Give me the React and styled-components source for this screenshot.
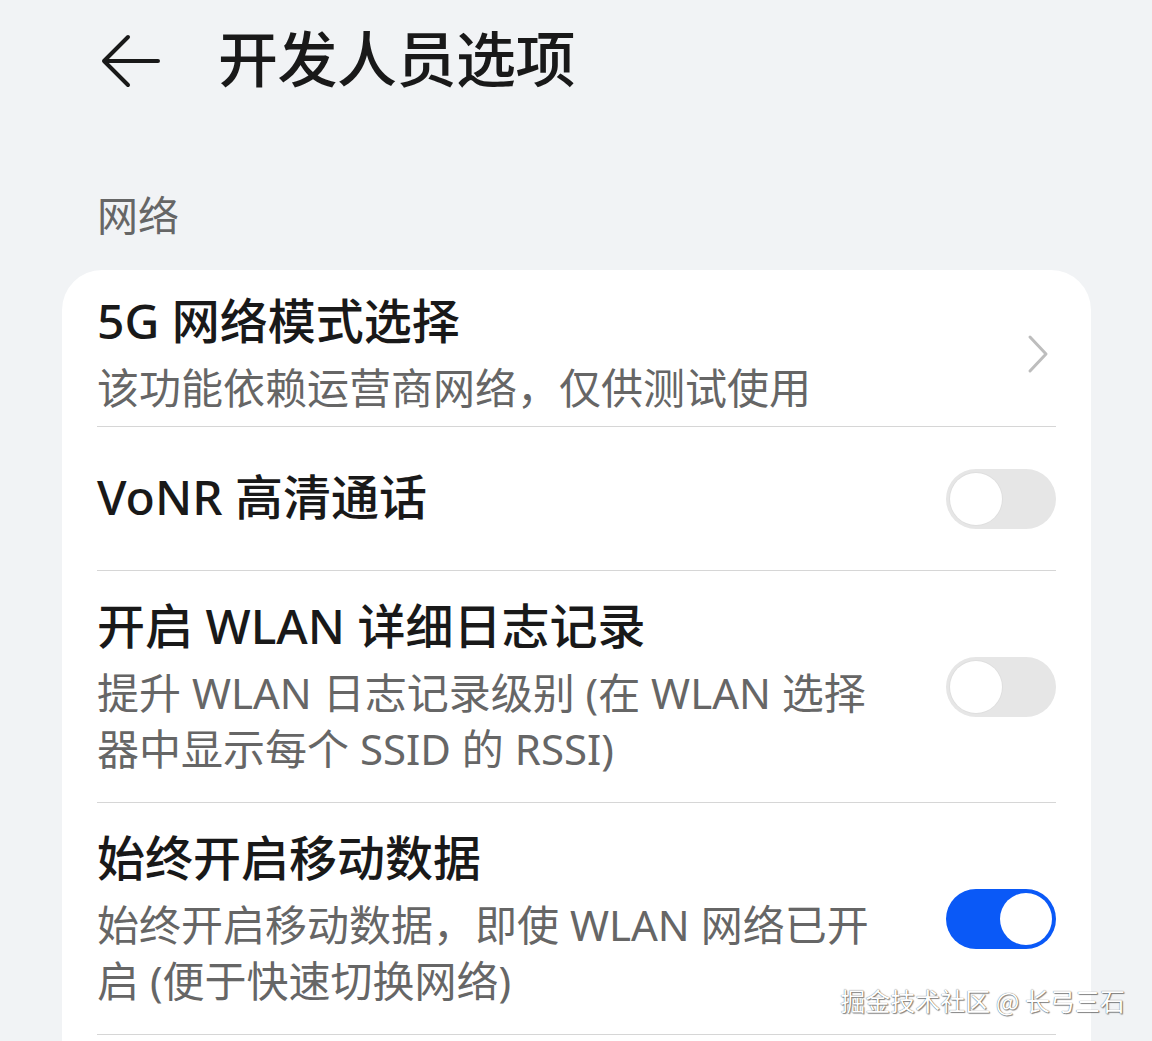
import React from "react";
import styled, { createGlobalStyle } from "styled-components";

const Global = createGlobalStyle`
  html, body {
    margin: 0;
    padding: 0;
    background: #f1f3f5;
    overflow: hidden;
  }
  body {
    font-family: "Noto Sans", "Noto Sans CJK SC", sans-serif;
    -webkit-font-smoothing: antialiased;
  }
`;

const Page = styled.div`
  position: relative;
  width: 1152px;
  height: 1041px;
  overflow: hidden;
  background: #f1f3f5;
  padding: 0 61px 0 62px;
  box-sizing: border-box;
`;

const Header = styled.header`
  height: 122px;
  display: flex;
  align-items: center;
  padding-left: 38px;
  gap: 54px;
`;

const BackIcon = styled.svg`
  width: 64px;
  height: 56px;
  flex: none;
`;

const Title = styled.h1`
  margin: 0;
  font-size: 60px;
  line-height: 76px;
  padding-bottom: 4px;
  font-weight: 500;
  color: #191919;
  letter-spacing: -0.5px;
`;

const SectionLabel = styled.div`
  padding: 68px 35px 24px;
  font-size: 41px;
  line-height: 50px;
  padding-bottom: 30px;
  color: #666666;
`;

const Card = styled.section`
  background: #ffffff;
  border-radius: 40px 40px 0 0;
  padding: 0 35px 60px;
`;

const Row = styled.div`
  display: flex;
  align-items: center;
  gap: 24px;
  padding: ${(p) => p.$pt}px 0 ${(p) => p.$pb}px;
  border-bottom: 1px solid #d6d6d6;
`;

const Texts = styled.div`
  flex: 1;
  min-width: 0;
  display: flex;
  flex-direction: column;
  gap: 6px;
`;

const RowTitle = styled.div`
  font-size: 48px;
  line-height: 62px;
  padding-bottom: 4px;
  font-weight: 500;
  color: #191919;
  white-space: nowrap;
`;

const Sub = styled.div`
  font-size: 42px;
  color: #666666;
`;

const SubLine = styled.div`
  line-height: 52px;
  padding-bottom: 4px;
  white-space: nowrap;
`;

const Chevron = styled.svg`
  width: 24px;
  height: 40px;
  flex: none;
  margin-right: 6px;
`;

const Track = styled.div`
  position: relative;
  flex: none;
  width: 110px;
  height: 60px;
  border-radius: 30px;
  background: ${(p) => (p.$on ? "#0a59f7" : "#e6e6e6")};
`;

const Knob = styled.div`
  position: absolute;
  top: 4px;
  left: ${(p) => (p.$on ? "54px" : "4px")};
  width: 52px;
  height: 52px;
  border-radius: 50%;
  background: #ffffff;
  box-shadow: ${(p) => (p.$on ? "none" : "0 0 0 1px rgba(0,0,0,0.03)")};
`;

const Watermark = styled.div`
  position: absolute;
  right: 27px;
  bottom: 24px;
  font-family: "Noto Sans CJK SC", sans-serif;
  font-size: 25px;
  line-height: 34px;
  color: #ffffff;
  text-shadow: 0 0 1px rgba(0, 0, 0, 0.7), 1px 1px 1px rgba(0, 0, 0, 0.45);
  white-space: nowrap;
`;

const Toggle = ({ on }) => (
  <Track $on={on}>
    <Knob $on={on} />
  </Track>
);

const rows = [
  {
    title: "5G 网络模式选择",
    sub: ["该功能依赖运营商网络，仅供测试使用"],
    control: "chevron",
    pt: 20,
    pb: 8,
  },
  { title: "VoNR 高清通话", sub: [], control: "off", pt: 39, pb: 38 },
  {
    title: "开启 WLAN 详细日志记录",
    sub: ["提升 WLAN 日志记录级别 (在 WLAN 选择", "器中显示每个 SSID 的 RSSI)"],
    control: "off",
    pt: 24,
    pb: 23,
  },
  {
    title: "始终开启移动数据",
    sub: ["始终开启移动数据，即使 WLAN 网络已开", "启 (便于快速切换网络)"],
    control: "on",
    pt: 24,
    pb: 23,
  },
];

export default function App() {
  return (
    <>
      <Global />
      <Page>
        <Header>
          <BackIcon viewBox="0 0 64 56" fill="none">
            <path
              d="M58 28H4M28 4L4 28L28 52"
              stroke="#191919"
              strokeWidth="4"
              strokeLinecap="round"
              strokeLinejoin="round"
            />
          </BackIcon>
          <Title>开发人员选项</Title>
        </Header>
        <SectionLabel>网络</SectionLabel>
        <Card>
          {rows.map((r) => (
            <Row key={r.title} $pt={r.pt} $pb={r.pb}>
              <Texts>
                <RowTitle>{r.title}</RowTitle>
                {r.sub.length > 0 && (
                  <Sub>
                    {r.sub.map((l) => (
                      <SubLine key={l}>{l}</SubLine>
                    ))}
                  </Sub>
                )}
              </Texts>
              {r.control === "chevron" ? (
                <Chevron viewBox="0 0 24 40" fill="none">
                  <path
                    d="M4 3L20 20L4 37"
                    stroke="#bdbdbd"
                    strokeWidth="3"
                    strokeLinecap="round"
                    strokeLinejoin="round"
                  />
                </Chevron>
              ) : (
                <Toggle on={r.control === "on"} />
              )}
            </Row>
          ))}
        </Card>
        <Watermark>掘金技术社区 @ 长弓三石</Watermark>
      </Page>
    </>
  );
}
